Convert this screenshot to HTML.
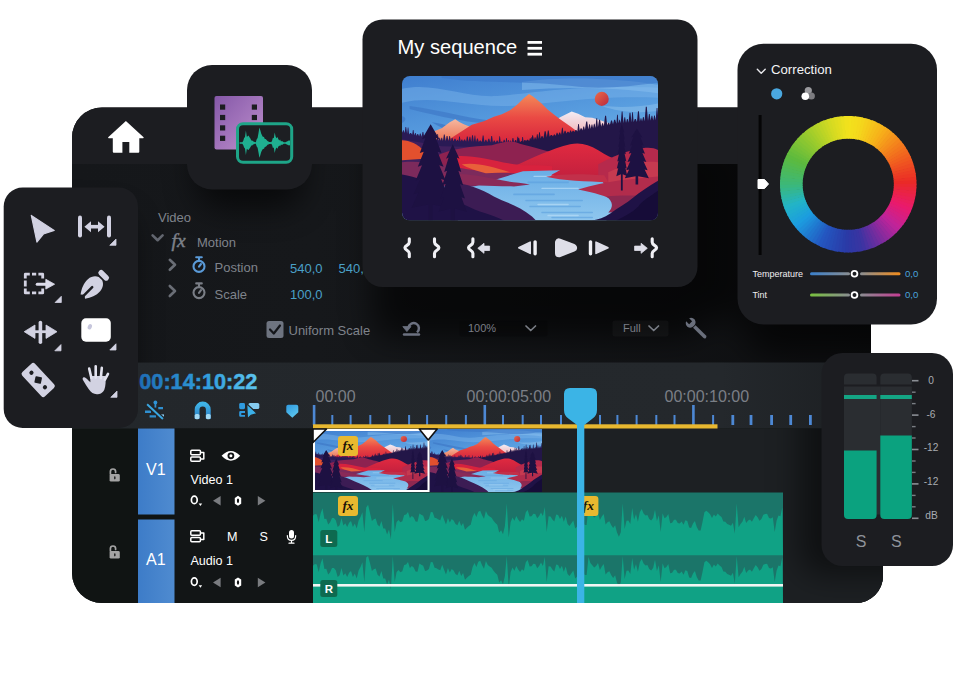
<!DOCTYPE html>
<html lang="en"><head><meta charset="utf-8"><title>Video editor</title>
<style>
html,body{margin:0;padding:0;background:#fff;}
body{width:960px;height:696px;overflow:hidden;font-family:"Liberation Sans",Arial,sans-serif;}
svg{display:block}
text{font-family:"Liberation Sans",Arial,sans-serif;}
</style></head><body>
<svg width="960" height="696" viewBox="0 0 960 696">

<defs>
<filter id="blur" x="-30%" y="-30%" width="160%" height="160%"><feGaussianBlur stdDeviation="16"/></filter>
<clipPath id="mainclip"><path d="M102 107.5 H871 V353 H883 V576 A27 27 0 0 1 856 603 H102 A30 30 0 0 1 72 573 V137.5 A30 30 0 0 1 102 107.5Z"/></clipPath>
<linearGradient id="fxbg" x1="0" y1="0" x2="1" y2="0"><stop offset="0" stop-color="#15171a"/><stop offset="0.3" stop-color="#16181b"/><stop offset="1" stop-color="#0e0f11"/></linearGradient>
<linearGradient id="tlh" x1="0" y1="0" x2="1" y2="0"><stop offset="0" stop-color="#23272b"/><stop offset="0.8" stop-color="#24282c"/><stop offset="1" stop-color="#1b1e21"/></linearGradient>
<linearGradient id="tcode" x1="0" y1="0" x2="1" y2="0"><stop offset="0" stop-color="#1e6db4"/><stop offset="0.55" stop-color="#2f9cdc"/><stop offset="1" stop-color="#5cc4ee"/></linearGradient>
<linearGradient id="bluelbl" x1="0" y1="0" x2="1" y2="0"><stop offset="0" stop-color="#3d7cc8"/><stop offset="1" stop-color="#4f8bd0"/></linearGradient>
<linearGradient id="film" x1="0" y1="0" x2="1" y2="1"><stop offset="0" stop-color="#8558a8"/><stop offset="0.5" stop-color="#a274bb"/><stop offset="1" stop-color="#bf93cd"/></linearGradient>
<linearGradient id="tempL" x1="0" y1="0" x2="1" y2="0"><stop offset="0" stop-color="#3a80cc"/><stop offset="1" stop-color="#8a8e92"/></linearGradient>
<linearGradient id="tempR" x1="0" y1="0" x2="1" y2="0"><stop offset="0" stop-color="#8a8e92"/><stop offset="1" stop-color="#f28c1c"/></linearGradient>
<linearGradient id="tintL" x1="0" y1="0" x2="1" y2="0"><stop offset="0" stop-color="#78c03e"/><stop offset="1" stop-color="#8a8e92"/></linearGradient>
<linearGradient id="tintR" x1="0" y1="0" x2="1" y2="0"><stop offset="0" stop-color="#8a8e92"/><stop offset="1" stop-color="#c43c92"/></linearGradient>
<linearGradient id="iconblue" x1="0" y1="0" x2="0" y2="1"><stop offset="0" stop-color="#3fb4e8"/><stop offset="1" stop-color="#2a7cc4"/></linearGradient>
<linearGradient id="markgrad" x1="0" y1="0" x2="0.6" y2="1"><stop offset="0" stop-color="#2f9ae0"/><stop offset="1" stop-color="#5cc6ee"/></linearGradient>
<linearGradient id="rfade" x1="0" y1="0" x2="1" y2="0"><stop offset="0" stop-color="#000" stop-opacity="0"/><stop offset="1" stop-color="#000" stop-opacity="0.32"/></linearGradient>
<clipPath id="trkclip"><rect x="542" y="428.5" width="342" height="176"/></clipPath>
<clipPath id="fxclip"><rect x="72" y="164" width="812" height="198.5"/></clipPath>
<clipPath id="clipSeq"><rect x="402" y="76" width="256" height="144.5" rx="8"/></clipPath>
<clipPath id="clipC1"><rect x="313" y="429" width="116.5" height="63"/></clipPath>
<clipPath id="clipC2"><rect x="429.5" y="429" width="112.5" height="63"/></clipPath>
</defs>
<symbol id="land" viewBox="0 0 256 144" preserveAspectRatio="xMidYMid slice">
<defs><linearGradient id="sky" x1="0" y1="0" x2="0.3" y2="1"><stop offset="0" stop-color="#3f7ecf"/><stop offset="0.45" stop-color="#5a9fe0"/><stop offset="1" stop-color="#8cc4ee"/></linearGradient><linearGradient id="mtn" x1="0" y1="0" x2="0" y2="1"><stop offset="0" stop-color="#f38a58"/><stop offset="0.45" stop-color="#ea4a44"/><stop offset="1" stop-color="#d4203c"/></linearGradient><linearGradient id="mtnL" x1="0" y1="0" x2="0" y2="1"><stop offset="0" stop-color="#f6b8a0"/><stop offset="1" stop-color="#ea6a4a"/></linearGradient><linearGradient id="mtnR" x1="0" y1="0" x2="0" y2="1"><stop offset="0" stop-color="#f2ecf4"/><stop offset="1" stop-color="#f2a0a0"/></linearGradient><linearGradient id="sun" x1="0" y1="0" x2="1" y2="1"><stop offset="0" stop-color="#ec6a48"/><stop offset="1" stop-color="#b8283e"/></linearGradient><linearGradient id="lake" x1="0" y1="0" x2="0" y2="1"><stop offset="0" stop-color="#6aaee6"/><stop offset="1" stop-color="#8fc6ee"/></linearGradient><linearGradient id="hillR" x1="0" y1="0" x2="0" y2="1"><stop offset="0" stop-color="#e02a40"/><stop offset="1" stop-color="#c4203e"/></linearGradient></defs>
<rect width="256" height="144" fill="url(#sky)"/>
<path d="M-5 14 C30 4 60 22 95 20 C130 18 170 8 262 12 L262 22 C190 18 140 30 100 30 C60 30 30 18 -5 28Z" fill="#7db6ea" opacity="0.45"/>
<path d="M120 6 C160 0 220 2 262 10 L262 18 C220 12 170 10 120 14Z" fill="#8fc4f0" opacity="0.45"/>
<path d="M8 30 C40 34 70 44 104 46 L104 49 C70 48 36 40 8 33Z" fill="#3f79c8" opacity="0.7"/>
<path d="M30 46 C44 48 56 52 66 55 L52 56 C44 53 36 50 30 46Z" fill="#3f79c8" opacity="0.8"/>
<path d="M0 40 C4 40 6 44 0 47Z" fill="#3f79c8" opacity="0.7"/>
<path d="M200 30 C225 32 245 30 262 26 L262 34 C240 38 215 36 200 30Z" fill="#9ccaf0" opacity="0.4"/>
<path d="M40 2 C80 8 120 4 170 10 C200 14 230 10 262 6 L262 0 L40 0Z" fill="#3a74c6" opacity="0.55"/>
<circle cx="199.5" cy="22.8" r="7" fill="url(#sun)"/>
<path d="M150 46 L158 41 L169.5 35.5 L176 37.5 L183 41 L190 41.5 L198 44 L210 48 L214 66 L150 66Z" fill="url(#mtnR)"/>
<path d="M17 62 L30 56 L40 52 L48 46 L53.5 43 L58 46 L62 48 L72 52 L80 68 L10 68Z" fill="url(#mtnL)"/>
<path d="M40 70 L46 64 L60 55 L70 48.5 L82 45 L92 40.5 L100 38 L108.5 34 L116 28 L122 22 L127 18 L131 20.5 L139 27 L145 33 L151.5 38 L158 43 L168 50 L176 56 L184 70 L40 70Z" fill="url(#mtn)"/>
<path d="M-2.0 82.0 L-2.0 56.1 L-1.1 53.6 L-0.3 53.6 L0.6 56.1 L0.6 56.6 L1.5 54.1 L2.2 54.1 L3.0 56.6 L3.0 57.2 L3.9 50.7 L4.6 50.7 L5.5 57.2 L5.5 57.7 L6.2 51.2 L6.8 51.2 L7.5 57.7 L7.5 58.2 L8.5 56.7 L9.4 56.7 L10.5 58.2 L10.5 58.8 L11.3 53.8 L11.9 53.8 L12.7 58.8 L12.7 59.3 L13.5 56.8 L14.1 56.8 L14.9 59.3 L14.9 59.8 L15.7 57.8 L16.5 57.8 L17.4 59.8 L17.4 60.4 L18.3 57.4 L19.0 57.4 L19.9 60.4 L19.9 60.9 L20.9 55.9 L21.7 55.9 L22.6 60.9 L22.6 61.5 L23.4 59.0 L24.1 59.0 L24.8 61.5 L24.8 62.0 L25.9 59.5 L26.7 59.5 L27.8 62.0 L27.8 62.7 L28.6 56.2 L29.3 56.2 L30.2 62.7 L30.2 63.2 L31.1 61.7 L31.9 61.7 L32.9 63.2 L32.9 63.8 L33.6 62.3 L34.3 62.3 L35.0 63.8 L35.0 64.3 L35.7 57.8 L36.3 57.8 L37.0 64.3 L37.0 64.5 L37.7 61.5 L38.3 61.5 L38.9 64.5 L38.9 64.6 L39.7 61.6 L40.4 61.6 L41.2 64.6 L41.2 64.7 L42.2 58.2 L43.0 58.2 L44.0 64.7 L44.0 64.8 L44.9 59.8 L45.8 59.8 L46.7 64.8 L46.7 64.9 L47.6 59.9 L48.3 59.9 L49.1 64.9 L49.1 64.9 L50.0 61.9 L50.8 61.9 L51.7 64.9 L51.7 65.0 L52.8 62.5 L53.7 62.5 L54.7 65.0 L54.7 65.1 L55.4 63.6 L56.0 63.6 L56.7 65.1 L56.7 65.2 L57.4 60.2 L58.1 60.2 L58.9 65.2 L58.9 65.2 L59.7 63.2 L60.5 63.2 L61.3 65.2 L61.3 65.3 L62.3 63.3 L63.2 63.3 L64.3 65.3 L64.3 65.4 L65.1 60.4 L65.9 60.4 L66.8 65.4 L66.8 65.5 L67.7 60.5 L68.5 60.5 L69.4 65.5 L69.4 65.6 L70.3 59.1 L71.1 59.1 L72.0 65.6 L72.0 65.7 L72.8 59.2 L73.4 59.2 L74.2 65.7 L74.2 65.7 L75.2 62.2 L76.0 62.2 L77.0 65.7 L77.0 65.8 L78.0 64.3 L78.9 64.3 L79.9 65.8 L79.9 65.9 L80.9 59.4 L81.7 59.4 L82.6 65.9 L82.6 66.0 L83.6 63.5 L84.4 63.5 L85.4 66.0 L85.4 66.1 L86.5 62.6 L87.4 62.6 L88.5 66.1 L88.5 66.2 L89.4 59.7 L90.2 59.7 L91.1 66.2 L91.1 66.3 L92.0 64.3 L92.8 64.3 L93.8 66.3 L93.8 66.4 L94.8 64.4 L95.7 64.4 L96.7 66.4 L96.7 66.5 L97.5 60.0 L98.1 60.0 L98.9 66.5 L98.9 66.6 L99.6 65.1 L100.2 65.1 L100.9 66.6 L100.9 66.6 L101.9 63.6 L102.7 63.6 L103.6 66.6 L103.6 66.7 L104.3 61.7 L104.9 61.7 L105.6 66.7 L105.6 66.8 L106.3 63.8 L106.9 63.8 L107.6 66.8 L107.6 66.8 L108.3 64.3 L108.9 64.3 L109.6 66.8 L109.6 66.9 L110.6 61.9 L111.4 61.9 L112.4 66.9 L112.4 67.0 L113.1 64.0 L113.8 64.0 L114.5 67.0 L114.5 67.1 L115.4 60.6 L116.2 60.6 L117.1 67.1 L117.1 67.1 L118.0 65.6 L118.7 65.6 L119.5 67.1 L119.5 67.2 L120.3 60.7 L121.0 60.7 L121.8 67.2 L121.8 67.3 L122.7 63.8 L123.5 63.8 L124.4 67.3 L124.4 67.4 L125.2 65.9 L125.9 65.9 L126.7 67.4 L126.7 67.5 L127.4 66.0 L128.0 66.0 L128.7 67.5 L128.7 67.5 L129.4 61.0 L130.0 61.0 L130.7 67.5 L130.0 82.0 Z" fill="#2a1a55"/>
<path d="M112.0 90.0 L112.0 67.5 L113.2 64.0 L114.2 64.0 L115.3 67.5 L115.3 66.8 L116.3 61.8 L117.2 61.8 L118.2 66.8 L118.2 66.3 L119.3 64.8 L120.3 64.8 L121.4 66.3 L121.4 65.6 L122.3 64.1 L123.0 64.1 L123.9 65.6 L123.9 65.1 L125.1 63.6 L126.1 63.6 L127.2 65.1 L127.2 64.5 L127.9 62.0 L128.6 62.0 L129.3 64.5 L129.3 64.0 L130.3 59.0 L131.0 59.0 L132.0 64.0 L132.0 63.5 L132.7 61.0 L133.4 61.0 L134.2 63.5 L134.2 63.1 L134.9 58.1 L135.6 58.1 L136.3 63.1 L136.3 62.6 L137.1 56.1 L137.8 56.1 L138.6 62.6 L138.6 62.2 L139.6 59.7 L140.4 59.7 L141.5 62.2 L141.5 61.6 L142.6 55.1 L143.6 55.1 L144.8 61.6 L144.8 60.9 L145.8 54.4 L146.6 54.4 L147.6 60.9 L147.6 60.4 L148.8 58.9 L149.8 58.9 L151.0 60.4 L151.0 59.7 L151.9 58.2 L152.8 58.2 L153.8 59.7 L153.8 59.1 L154.6 56.6 L155.4 56.6 L156.2 59.1 L156.2 58.7 L157.2 56.2 L158.0 56.2 L159.0 58.7 L159.0 58.1 L159.9 51.6 L160.6 51.6 L161.5 58.1 L161.5 57.6 L162.5 54.6 L163.4 54.6 L164.4 57.6 L164.4 57.0 L165.4 55.5 L166.3 55.5 L167.3 57.0 L167.3 56.4 L168.1 54.4 L168.8 54.4 L169.6 56.4 L169.6 56.0 L170.6 54.5 L171.4 54.5 L172.4 56.0 L172.4 55.4 L173.4 53.9 L174.2 53.9 L175.2 55.4 L175.2 54.9 L176.0 47.8 L176.7 47.8 L177.6 54.9 L177.6 54.4 L178.5 52.1 L179.4 52.1 L180.3 54.4 L180.3 53.8 L181.2 50.3 L181.9 50.3 L182.8 53.8 L182.8 53.3 L184.0 45.4 L185.0 45.4 L186.1 53.3 L186.1 52.7 L187.0 48.2 L187.7 48.2 L188.6 52.7 L188.6 52.2 L189.4 48.3 L190.1 48.3 L190.9 52.2 L190.9 51.7 L191.7 47.7 L192.4 47.7 L193.3 51.7 L193.3 51.2 L194.1 42.2 L194.9 42.2 L195.7 51.2 L195.7 50.8 L196.9 43.6 L197.8 43.6 L199.0 50.8 L199.0 50.1 L199.9 47.1 L200.7 47.1 L201.6 50.1 L201.6 49.6 L202.8 39.6 L203.8 39.6 L205.0 49.6 L205.0 48.9 L205.9 46.5 L206.8 46.5 L207.7 48.9 L207.7 48.4 L208.8 44.3 L209.7 44.3 L210.8 48.4 L210.8 47.7 L211.9 43.5 L212.9 43.5 L214.1 47.7 L214.1 47.4 L214.8 38.7 L215.5 38.7 L216.2 47.4 L216.2 47.2 L217.0 43.7 L217.6 43.7 L218.4 47.2 L218.4 47.0 L219.4 35.3 L220.2 35.3 L221.2 47.0 L221.2 46.8 L222.1 41.2 L222.8 41.2 L223.7 46.8 L223.7 46.6 L224.6 42.8 L225.4 42.8 L226.2 46.6 L226.2 46.3 L227.2 36.6 L228.1 36.6 L229.1 46.3 L229.1 46.1 L229.8 36.1 L230.5 36.1 L231.3 46.1 L231.3 45.9 L232.4 42.8 L233.4 42.8 L234.6 45.9 L234.6 45.6 L235.6 35.2 L236.5 35.2 L237.5 45.6 L237.5 45.3 L238.3 42.1 L238.9 42.1 L239.7 45.3 L239.7 45.1 L240.6 40.8 L241.3 40.8 L242.2 45.1 L242.2 44.9 L243.4 30.6 L244.4 30.6 L245.6 44.9 L245.6 44.6 L246.5 37.8 L247.3 37.8 L248.2 44.6 L248.2 44.4 L249.1 39.7 L249.9 39.7 L250.8 44.4 L250.8 44.1 L251.7 39.4 L252.4 39.4 L253.3 44.1 L253.3 43.9 L254.2 31.9 L255.0 31.9 L255.9 43.9 L255.9 43.7 L256.7 27.9 L257.3 27.9 L258.1 43.7 L258.1 43.5 L258.9 39.8 L259.6 39.8 L260.5 43.5 L260.0 90.0 Z" fill="#231648"/>
<path d="M0 63 L40 70 L128 72 L128 90 L0 90Z" fill="#40205e"/>
<path d="M0 64 C8 64 16 68 22 74 L30 82 L0 84Z" fill="#e2502e"/>
<path d="M34 80 C50 72 70 70 90 69 C100 66 108 64 114 66 C124 70 140 72 160 80 L160 92 L34 92Z" fill="#8e2250"/>
<path d="M112 90 C130 82 150 72 168 68 C178 66 186 68 196 74 C204 79 210 82 216 84 L216 100 L112 100Z" fill="url(#hillR)"/>
<path d="M52 80 C70 78 90 84 112 88 C125 90 135 88 150 90 L150 100 L52 98Z" fill="#d8223e"/>
<path d="M196 88 C210 80 226 74 240 72 C248 71 252 72 256 74 L256 130 L196 120Z" fill="#b62a4c"/>
<path d="M206 96 C222 88 240 84 256 86 L256 120 L206 118Z" fill="#c63a50"/>
<path d="M0 86 C20 84 40 88 60 92 C80 96 100 96 128 98 L128 110 L0 110Z" fill="#7c2a5c"/>
<path d="M60 88 C75 86 90 90 108 96 L84 97 C74 94 66 92 60 88Z" fill="#e8603a"/>
<path d="M66 112 C82 107 100 101 121 95 L158 94 C152 97 147 99 150 101 C165 103 185 103 200 105 L206 114 C213 122 216 130 204 144 L56 144Z" fill="url(#lake)"/>
<path d="M112 118 h40 M124 124 h56 M128 130 h50 M140 136 h50 M126 106 h40 M150 141 h40" stroke="#5a9ede" stroke-width="1.6" opacity="0.6" fill="none" stroke-linecap="round"/>
<path d="M136 128 h30 M140 112 h36 M146 139 h30 M132 100 h20" stroke="#b6dcf6" stroke-width="1.4" opacity="0.7" fill="none" stroke-linecap="round"/>
<path d="M40 98 C60 96 80 100 100 104 C110 106 118 106 128 108 L112 110 C90 110 70 108 40 108Z" fill="#8a2a58"/>
<path d="M144 100.5 C160 97 180 97.5 202 99 L206 106 C185 105 160 104.5 144 100.5Z" fill="#c2304a"/>
<path d="M176 113 C190 109 204 106 218 104 L256 100 L256 128 C236 126 214 126 210 124 C206 120 192 116 176 113Z" fill="#b22c4c"/>
<path d="M204 120 C216 118 236 120 256 118 L256 136 L206 136 C212 130 210 124 204 120Z" fill="#8e2850"/>
<path d="M50 106 C64 107 80 113 92 120 C104 126 118 130 130 140 L134 144 L50 144Z" fill="#3c1c54"/>
<path d="M0 98 C14 100 28 106 40 114 C52 122 62 129 78 135 C88 138 96 141 102 144 L0 144Z" fill="#1f1246"/>
<path d="M256 104 C246 110 238 115 231 121 C224 127 216 131 208 137 C202 141 196 143 190 144 L256 144Z" fill="#1f1246"/>
<path d="M256 114 C248 120 240 124 236 130 C230 136 222 140 214 144 L256 144Z" fill="#160c38"/>
<path d="M29.0 46.0 L29.0 48.0 L20.3 63.1 L23.8 61.7 L18.2 76.8 L22.1 75.4 L16.2 90.4 L20.4 89.0 L14.1 104.1 L18.6 102.7 L12.1 117.8 L16.9 116.4 L10.0 131.4 L27.0 128.0 L27.0 144.0 L31.0 144.0 L31.0 128.0 L48.0 131.4 L41.1 116.4 L45.9 117.8 L39.4 102.7 L43.9 104.1 L37.6 89.0 L41.8 90.4 L35.9 75.4 L39.8 76.8 L34.2 61.7 L37.7 63.1 L29.0 48.0 Z" fill="#1d1142"/>
<path d="M51.0 66.0 L51.0 68.0 L44.3 82.5 L46.9 81.2 L42.5 95.7 L45.4 94.4 L40.6 108.9 L43.9 107.6 L38.8 122.1 L42.3 120.8 L37.0 135.3 L49.0 132.0 L49.0 144.0 L53.0 144.0 L53.0 132.0 L65.0 135.3 L59.7 120.8 L63.2 122.1 L58.1 107.6 L61.4 108.9 L56.6 94.4 L59.5 95.7 L55.1 81.2 L57.7 82.5 L51.0 68.0 Z" fill="#1d1142"/>
<path d="M219.5 47.0 L219.5 48.1 L217.1 56.1 L218.1 55.4 L216.6 63.4 L217.6 62.7 L216.0 70.7 L217.2 70.0 L215.5 78.0 L216.8 77.2 L215.0 85.2 L216.3 84.5 L214.5 92.5 L215.9 91.8 L214.0 99.8 L218.6 98.0 L218.6 114.0 L220.4 114.0 L220.4 98.0 L225.0 99.8 L223.1 91.8 L224.5 92.5 L222.7 84.5 L224.0 85.2 L222.2 77.2 L223.5 78.0 L221.8 70.0 L223.0 70.7 L221.4 62.7 L222.4 63.4 L220.9 55.4 L221.9 56.1 L219.5 48.1 Z" fill="#1d1142"/>
<path d="M234.5 51.0 L234.5 52.2 L229.0 61.2 L231.2 60.4 L227.7 69.4 L230.1 68.6 L226.4 77.5 L229.0 76.7 L225.1 85.7 L227.9 84.9 L223.8 93.9 L226.8 93.1 L222.5 102.0 L233.2 100.0 L233.2 108.0 L235.8 108.0 L235.8 100.0 L246.5 102.0 L242.2 93.1 L245.2 93.9 L241.1 84.9 L243.9 85.7 L240.0 76.7 L242.6 77.5 L238.9 68.6 L241.3 69.4 L237.8 60.4 L240.0 61.2 L234.5 52.2 Z" fill="#1d1142"/>
</symbol>
<g clip-path="url(#mainclip)">
<rect x="72" y="107" width="812" height="497" fill="#131417"/>
<rect x="72" y="107" width="812" height="57" fill="#1c1d21"/>
<rect x="72" y="164" width="812" height="198.5" fill="url(#fxbg)"/>
<rect x="72" y="362.5" width="812" height="66.5" fill="url(#tlh)"/>
<rect x="72" y="428.5" width="812" height="176" fill="#101413"/>
<rect x="174.5" y="428.5" width="138.5" height="176" fill="#121516"/>
<rect x="313" y="428.5" width="571" height="176" fill="#1d2023"/>
<g clip-path="url(#trkclip)"><rect x="800" y="370" width="120" height="205" rx="20" fill="#000" opacity="0.5" filter="url(#blur)"/></g>
<g clip-path="url(#fxclip)"><g filter="url(#blur)" fill="#000" opacity="0.62">
<rect x="372" y="70" width="330" height="268" rx="20"/>
<rect x="745" y="80" width="185" height="275" rx="26"/>
<rect x="700" y="140" width="40" height="180" rx="10"/>
<rect x="196" y="90" width="107" height="118" rx="25"/>
<rect x="10" y="215" width="120" height="238" rx="19"/>
</g></g>
</g>
<path d="M125.9 121 L143.6 137.2 Q144 138.2 143 138.2 H139.3 V151.8 Q139.3 152.8 138.3 152.8 H129.3 V142 H122.4 V152.8 H113.8 Q112.8 152.8 112.8 151.8 V138.2 H108.8 Q107.8 138.2 108.2 137.2Z" fill="#fff"/>
<g font-size="13" fill="#7f838b">
<text x="158" y="222">Video</text>
<text x="197" y="246.7">Motion</text>
<text x="214.5" y="272.3">Postion</text>
<text x="214.5" y="298.8">Scale</text>
<text x="288.5" y="335">Uniform Scale</text>
</g>
<g font-size="13" fill="#4aa0c8">
<text x="290" y="272.5">540,0</text>
<text x="338.5" y="272.5">540,0</text>
<text x="290" y="298.8">100,0</text>
</g>
<text x="171.5" y="247" style="font:italic 19.5px 'Liberation Serif',serif" fill="#7d818a" stroke="#7d818a" stroke-width="0.45">fx</text>
<path d="M152.6 235.4 L157.6 240.2 L162.6 235.4" fill="none" stroke="#62666f" stroke-width="2.6" stroke-linecap="round" stroke-linejoin="round"/>
<path d="M169.8 259.8 L175 264.8 L169.8 269.8" fill="none" stroke="#6a6e76" stroke-width="2.6" stroke-linecap="round" stroke-linejoin="round"/>
<path d="M169.8 286 L175 291 L169.8 296" fill="none" stroke="#6a6e76" stroke-width="2.6" stroke-linecap="round" stroke-linejoin="round"/>
<g fill="none" stroke="#5a9ad8" stroke-width="2.1" stroke-linecap="round"><circle cx="199.0" cy="266.4" r="5.5"/><path d="M199.0 260.4 V257.8 M196.2 257.2 H201.8 M199.0 266.6 L201.0 264.0"/></g>
<g fill="none" stroke="#7a7e86" stroke-width="2.1" stroke-linecap="round"><circle cx="199.0" cy="292.6" r="5.5"/><path d="M199.0 286.6 V284.0 M196.2 283.4 H201.8 M199.0 292.8 L201.0 290.2"/></g>
<rect x="266.5" y="321" width="17" height="17" rx="2.5" fill="#6e7480"/>
<path d="M270 329.5 L273.8 333.5 L280 325.5" fill="none" stroke="#14161a" stroke-width="2.2" stroke-linecap="round" stroke-linejoin="round"/>
<g><path d="M417 332.4 A5.3 5.3 0 1 0 408.4 327.4" fill="none" stroke="#6c7180" stroke-width="2.5"/><path d="M402.8 326.6 H411 L406.9 331.6Z" fill="#6c7180" stroke="#6c7180" stroke-width="0.8" stroke-linejoin="round"/><rect x="402.8" y="333.2" width="17.4" height="2.6" rx="1.2" fill="#6c7180"/></g>
<rect x="459.5" y="320.5" width="88" height="16" rx="2" fill="#000" opacity="0.18"/>
<text x="468" y="332.2" font-size="11" fill="#7a7e86">100%</text>
<path d="M526 326 L530.7 330.5 L535.5 326" fill="none" stroke="#7a7e86" stroke-width="1.7" stroke-linecap="round" stroke-linejoin="round"/>
<rect x="612.5" y="320.5" width="56" height="16" rx="2" fill="#fff" opacity="0.03"/>
<text x="623" y="332.2" font-size="11" fill="#7a7e86">Full</text>
<path d="M649 326 L653.7 330.5 L658.5 326" fill="none" stroke="#7a7e86" stroke-width="1.7" stroke-linecap="round" stroke-linejoin="round"/>
<g transform="translate(696.3 328.4) rotate(-45) scale(0.93)"><path d="M-1.9 -3 V12.5 Q-1.9 14.6 0 14.6 Q1.9 14.6 1.9 12.5 V-3 Z" fill="#6a6f7c"/><path d="M-5.6 -8 A5.8 5.8 0 0 0 5.6 -8 A5.8 5.8 0 0 0 2.3 -13.2 V-8.6 H-2.3 V-13.2 A5.8 5.8 0 0 0 -5.6 -8Z" fill="#6a6f7c"/></g>
<g clip-path="url(#mainclip)">
<text x="139.3" y="389.2" font-size="22" font-weight="bold" stroke="url(#tcode)" stroke-width="0.5" fill="url(#tcode)" textLength="118" lengthAdjust="spacingAndGlyphs">00:14:10:22</text>
<g stroke="#2f8fd0" stroke-width="2.4" fill="none"><path d="M158.3 408.1 H163 M145 411.8 H151 M149.6 416.4 H156"/><path d="M160 415.6 H164" stroke="#8ccaf0"/><path d="M155.4 402.5 V407.6" stroke="#2f93d6" stroke-width="1.8"/><path d="M147.1 404.3 L162.9 418.9" stroke="#22262a" stroke-width="4.4"/><path d="M147.1 404.3 L162.9 418.9" stroke="#3aa6e0" stroke-width="2"/></g>
<circle cx="155.4" cy="402.4" r="1.9" fill="#2f93d6"/>
<path d="M197.1 419 V409.6 A5.6 5.6 0 0 1 208.3 409.6 V419" fill="none" stroke="url(#iconblue)" stroke-width="4.8"/>
<rect x="194.7" y="414" width="4.8" height="5.2" rx="1.6" fill="#a4daf4"/><rect x="205.9" y="414" width="4.8" height="5.2" rx="1.6" fill="#a4daf4"/>
<g><rect x="239.2" y="403.1" width="5.8" height="6.1" rx="1.4" fill="#2f9be0"/><path d="M245 411 H240.4 Q239.2 411 239.2 412.2 V415.6 Q239.2 416.8 240.4 416.8 H245 V414.9 H241.3 V412.9 H245Z" fill="#2f9be0"/><rect x="248.4" y="403" width="10.9" height="6" rx="1.6" fill="#86ccf0"/><path d="M246.6 403.6 L257.2 413.6 L251 415.4 L247.4 419Z" fill="#3cb0e8" stroke="#22262a" stroke-width="1.3" stroke-linejoin="round"/></g>
<path d="M288.2 404.8 H296.4 Q298.3 404.8 298.3 406.7 V412.2 L292.3 417.7 L286.3 412.2 V406.7 Q286.3 404.8 288.2 404.8Z" fill="url(#markgrad)"/>
<g font-size="16" fill="#7b7f86">
<text x="315.5" y="402.3">00:00</text>
<text x="466.5" y="402.3">00:00:05:00</text>
<text x="664.5" y="402.3">00:00:10:00</text>
</g>
<rect x="312.8" y="405" width="2.6" height="20" fill="#4d88d4"/>
<rect x="331.3" y="415" width="2.0" height="10" fill="#4d88d4"/>
<rect x="349.6" y="415" width="2.0" height="10" fill="#4d88d4"/>
<rect x="369.3" y="415" width="2.0" height="10" fill="#4d88d4"/>
<rect x="388.4" y="415" width="2.0" height="10" fill="#4d88d4"/>
<rect x="408.1" y="415" width="2.0" height="10" fill="#4d88d4"/>
<rect x="426.1" y="415" width="2.0" height="10" fill="#4d88d4"/>
<rect x="445.2" y="415" width="2.0" height="10" fill="#4d88d4"/>
<rect x="464.9" y="415" width="2.0" height="10" fill="#4d88d4"/>
<rect x="483.5" y="405" width="2.6" height="20" fill="#4d88d4"/>
<rect x="502.0" y="415" width="2.0" height="10" fill="#4d88d4"/>
<rect x="521.7" y="415" width="2.0" height="10" fill="#4d88d4"/>
<rect x="540.0" y="415" width="2.0" height="10" fill="#4d88d4"/>
<rect x="560.0" y="415" width="2.0" height="10" fill="#4d88d4"/>
<rect x="579.0" y="415" width="2.0" height="10" fill="#4d88d4"/>
<rect x="599.0" y="415" width="2.0" height="10" fill="#4d88d4"/>
<rect x="616.4" y="415" width="2.0" height="10" fill="#4d88d4"/>
<rect x="635.6" y="415" width="2.0" height="10" fill="#4d88d4"/>
<rect x="655.3" y="415" width="2.0" height="10" fill="#4d88d4"/>
<rect x="673.5" y="415" width="2.0" height="10" fill="#4d88d4"/>
<rect x="692.1" y="405" width="2.6" height="20" fill="#4d88d4"/>
<rect x="712.1" y="415" width="2.0" height="10" fill="#4d88d4"/>
<rect x="731.4" y="415" width="2.8" height="10" fill="#4d88d4"/>
<rect x="749.6" y="415" width="2.8" height="10" fill="#4d88d4"/>
<rect x="770.2" y="415" width="2.8" height="10" fill="#4d88d4"/>
<rect x="789.3" y="415" width="2.8" height="10" fill="#4d88d4"/>
<rect x="809.0" y="415" width="2.8" height="10" fill="#4d88d4"/>
<rect x="313" y="424.3" width="404.5" height="4.2" fill="#e8b830"/>
<rect x="138" y="428.5" width="36.5" height="86" fill="url(#bluelbl)"/>
<rect x="138" y="519.5" width="36.5" height="90" fill="url(#bluelbl)"/>
<text x="155.8" y="475" font-size="16" fill="#fff" text-anchor="middle">V1</text>
<text x="155.8" y="565" font-size="16" fill="#fff" text-anchor="middle">A1</text>
<g transform="translate(108.0 468.0)"><path d="M2.4 6 V3.6 A2.6 2.6 0 0 1 7.6 3.6 V4.4" fill="none" stroke="#a4a4a4" stroke-width="1.7" stroke-linecap="round"/><rect x="1.6" y="6" width="10.2" height="7.6" rx="1.4" fill="#a4a4a4"/><rect x="6" y="8.2" width="1.6" height="3.2" rx="0.8" fill="#2a2a2a"/></g>
<g transform="translate(108.0 545.0)"><path d="M2.4 6 V3.6 A2.6 2.6 0 0 1 7.6 3.6 V4.4" fill="none" stroke="#a4a4a4" stroke-width="1.7" stroke-linecap="round"/><rect x="1.6" y="6" width="10.2" height="7.6" rx="1.4" fill="#a4a4a4"/><rect x="6" y="8.2" width="1.6" height="3.2" rx="0.8" fill="#2a2a2a"/></g>
<g transform="translate(190.0 449.5)" fill="none" stroke="#fff" stroke-width="1.5" stroke-linejoin="round"><rect x="0.8" y="0.8" width="9.6" height="4.4" rx="1"/><rect x="0.8" y="7.4" width="9.6" height="4.4" rx="1"/><path d="M10.4 3 H13.8 V9.6 H10.4"/></g>
<g transform="translate(190.0 530.0)" fill="none" stroke="#fff" stroke-width="1.5" stroke-linejoin="round"><rect x="0.8" y="0.8" width="9.6" height="4.4" rx="1"/><rect x="0.8" y="7.4" width="9.6" height="4.4" rx="1"/><path d="M10.4 3 H13.8 V9.6 H10.4"/></g>
<path d="M221.6 455.8 Q230.8 446 240.2 455.8 Q230.8 465.6 221.6 455.8Z" fill="#fff"/>
<circle cx="230.9" cy="455.8" r="3.4" fill="#111315"/><circle cx="230.9" cy="455.8" r="1.5" fill="#fff"/>
<g font-size="12.6" fill="#fff">
<text x="190.6" y="484.3">Video 1</text>
<text x="190.4" y="565">Audio 1</text>
<text x="227" y="541" font-size="12.6">M</text>
<text x="259.4" y="541" font-size="12.6">S</text>
</g>
<rect x="289" y="530" width="5" height="8.6" rx="2.5" fill="#fff"/>
<path d="M287.3 535.5 Q287.3 540.4 291.5 540.4 Q295.7 540.4 295.7 535.5 M291.5 540.4 V543 M289 543.2 H294" fill="none" stroke="#fff" stroke-width="1.2" stroke-linecap="round"/>
<ellipse cx="194.3" cy="499.9" rx="2.9" ry="3.8" fill="none" stroke="#fff" stroke-width="1.7"/>
<path d="M198.6 503.6 h3.6 l-1.8 2.4z" fill="#fff"/>
<path d="M220.6 496.0 V505.6 L213 500.8Z" fill="#7a7c80"/>
<path d="M238 495.8 L241.2 497.9 V503.7 L238 505.8 L234.8 503.7 V497.9Z" fill="#fff"/>
<ellipse cx="238" cy="500.8" rx="1.1" ry="2.2" fill="#111315"/>
<path d="M257.8 496.0 V505.6 L265.4 500.8Z" fill="#7a7c80"/>
<ellipse cx="194.3" cy="581.6" rx="2.9" ry="3.8" fill="none" stroke="#fff" stroke-width="1.7"/>
<path d="M198.6 585.3 h3.6 l-1.8 2.4z" fill="#fff"/>
<path d="M220.6 577.7 V587.3 L213 582.5Z" fill="#7a7c80"/>
<path d="M238 577.5 L241.2 579.6 V585.4 L238 587.5 L234.8 585.4 V579.6Z" fill="#fff"/>
<ellipse cx="238" cy="582.5" rx="1.1" ry="2.2" fill="#111315"/>
<path d="M257.8 577.7 V587.3 L265.4 582.5Z" fill="#7a7c80"/>
<g clip-path="url(#clipC1)"><g transform="translate(313 429) scale(0.4551 0.4375)"><use href="#land" width="256" height="144"/></g></g>
<g clip-path="url(#clipC2)"><g transform="translate(429.5 429) scale(0.4395 0.4375)"><use href="#land" width="256" height="144"/></g></g>
<rect x="314" y="430" width="114.5" height="61" fill="none" stroke="#fff" stroke-width="2"/>
<path d="M313 429 H326.5 L313 442.5Z" fill="#fff" stroke="#111" stroke-width="1.6" stroke-linejoin="round"/>
<path d="M419.3 429 H437.2 L428.2 440Z" fill="#fff" stroke="#111" stroke-width="1.6" stroke-linejoin="round"/>
<rect x="313" y="492.5" width="470" height="112" fill="#1b7569"/>
<path d="M313.0 555.3 L313.0 515.8 L314.9 514.0 L316.8 514.6 L318.7 522.1 L320.6 513.4 L322.5 508.2 L324.4 519.0 L326.3 518.7 L328.2 524.5 L330.1 522.3 L332.0 517.9 L333.9 518.0 L335.8 520.3 L337.7 526.9 L339.6 525.3 L341.5 518.0 L343.4 525.4 L345.3 523.3 L347.2 527.1 L349.1 522.7 L351.0 521.1 L352.9 526.9 L354.8 523.5 L356.7 528.4 L358.6 520.5 L360.5 517.1 L362.4 512.3 L364.3 532.0 L366.2 507.5 L368.1 504.7 L370.0 513.0 L371.9 520.9 L373.8 519.2 L375.7 518.6 L377.6 524.7 L379.5 526.4 L381.4 520.9 L383.3 528.5 L385.2 528.5 L387.1 534.5 L389.0 529.5 L390.9 538.9 L392.8 503.5 L394.7 531.9 L396.6 522.1 L398.5 520.0 L400.4 522.3 L402.3 521.2 L404.2 515.1 L406.1 514.4 L408.0 512.1 L409.9 517.9 L411.8 516.1 L413.7 517.4 L415.6 521.4 L417.5 521.7 L419.4 513.6 L421.3 514.7 L423.2 515.7 L425.1 520.9 L427.0 520.5 L428.9 519.1 L430.8 512.0 L432.7 512.3 L434.6 517.7 L436.5 518.2 L438.4 519.4 L440.3 520.2 L442.2 514.8 L444.1 519.8 L446.0 524.4 L447.9 517.9 L449.8 522.6 L451.7 518.9 L453.6 520.5 L455.5 523.9 L457.4 525.2 L459.3 520.8 L461.2 526.0 L463.1 522.9 L465.0 529.7 L466.9 527.8 L468.8 526.1 L470.7 524.7 L472.6 517.0 L474.5 513.1 L476.4 517.0 L478.3 511.8 L480.2 510.7 L482.1 515.3 L484.0 518.8 L485.9 511.1 L487.8 515.0 L489.7 516.4 L491.6 517.8 L493.5 520.7 L495.4 523.0 L497.3 524.7 L499.2 532.6 L501.1 530.2 L503.0 534.3 L504.9 526.0 L506.8 503.5 L508.7 537.5 L510.6 522.3 L512.5 517.6 L514.4 520.8 L516.3 515.9 L518.2 519.6 L520.1 522.0 L522.0 519.2 L523.9 520.8 L525.8 512.3 L527.7 509.9 L529.6 516.5 L531.5 516.2 L533.4 513.8 L535.3 513.9 L537.2 518.3 L539.1 516.0 L541.0 512.4 L542.9 515.9 L544.8 507.1 L546.7 532.0 L548.6 516.2 L550.5 516.5 L552.4 519.5 L554.3 521.4 L556.2 514.4 L558.1 515.0 L560.0 519.1 L561.9 515.7 L563.8 521.8 L565.7 516.6 L567.6 524.0 L569.5 526.1 L571.4 523.3 L573.3 520.4 L575.2 528.6 L577.1 526.4 L579.0 521.8 L580.9 527.4 L582.8 520.6 L584.7 524.9 L586.6 525.0 L588.5 507.1 L590.4 512.9 L592.3 515.2 L594.2 517.5 L596.1 515.9 L598.0 513.0 L599.9 520.1 L601.8 516.4 L603.7 513.9 L605.6 524.5 L607.5 522.2 L609.4 521.2 L611.3 525.2 L613.2 528.0 L615.1 525.2 L617.0 532.6 L618.9 536.7 L620.8 532.2 L622.7 503.5 L624.6 528.9 L626.5 520.7 L628.4 520.5 L630.3 524.0 L632.2 507.9 L634.1 519.7 L636.0 514.1 L637.9 521.7 L639.8 512.2 L641.7 509.0 L643.6 513.6 L645.5 515.5 L647.4 514.9 L649.3 519.1 L651.2 520.5 L653.1 517.9 L655.0 509.8 L656.9 520.9 L658.8 515.3 L660.7 532.0 L662.6 513.3 L664.5 518.2 L666.4 517.0 L668.3 514.1 L670.2 523.3 L672.1 522.8 L674.0 519.8 L675.9 519.7 L677.8 523.1 L679.7 523.6 L681.6 521.5 L683.5 524.7 L685.4 520.2 L687.3 520.9 L689.2 527.6 L691.1 528.0 L693.0 523.4 L694.9 521.0 L696.8 527.0 L698.7 530.4 L700.6 530.6 L702.5 522.1 L704.4 512.3 L706.3 510.8 L708.2 512.3 L710.1 514.3 L712.0 518.1 L713.9 514.4 L715.8 516.6 L717.7 513.5 L719.6 515.6 L721.5 517.0 L723.4 521.4 L725.3 521.7 L727.2 524.0 L729.1 524.7 L731.0 525.7 L732.9 522.8 L734.8 533.5 L736.7 503.5 L738.6 527.3 L740.5 524.0 L742.4 521.8 L744.3 516.7 L746.2 523.0 L748.1 520.4 L750.0 519.6 L751.9 521.7 L753.8 518.3 L755.7 515.1 L757.6 517.3 L759.5 520.8 L761.4 519.1 L763.3 514.7 L765.2 514.0 L767.1 513.7 L769.0 518.0 L770.9 518.4 L772.8 517.3 L774.7 532.0 L776.6 520.4 L778.5 515.6 L780.4 516.3 L782.3 507.5 L783.0 555.3 Z" fill="#10a285"/>
<path d="M313.0 604.0 L313.0 565.8 L314.9 564.0 L316.8 564.6 L318.7 572.1 L320.6 563.4 L322.5 558.2 L324.4 569.0 L326.3 568.7 L328.2 574.5 L330.1 572.3 L332.0 567.9 L333.9 568.0 L335.8 570.3 L337.7 576.9 L339.6 575.3 L341.5 568.0 L343.4 575.4 L345.3 573.3 L347.2 577.1 L349.1 572.7 L351.0 571.1 L352.9 576.9 L354.8 573.5 L356.7 578.4 L358.6 570.5 L360.5 567.1 L362.4 562.3 L364.3 582.0 L366.2 557.5 L368.1 556.0 L370.0 563.0 L371.9 570.9 L373.8 569.2 L375.7 568.6 L377.6 574.7 L379.5 576.4 L381.4 570.9 L383.3 578.5 L385.2 578.5 L387.1 584.5 L389.0 579.5 L390.9 588.9 L392.8 556.0 L394.7 581.9 L396.6 572.1 L398.5 570.0 L400.4 572.3 L402.3 571.2 L404.2 565.1 L406.1 564.4 L408.0 562.1 L409.9 567.9 L411.8 566.1 L413.7 567.4 L415.6 571.4 L417.5 571.7 L419.4 563.6 L421.3 564.7 L423.2 565.7 L425.1 570.9 L427.0 570.5 L428.9 569.1 L430.8 562.0 L432.7 562.3 L434.6 567.7 L436.5 568.2 L438.4 569.4 L440.3 570.2 L442.2 564.8 L444.1 569.8 L446.0 574.4 L447.9 567.9 L449.8 572.6 L451.7 568.9 L453.6 570.5 L455.5 573.9 L457.4 575.2 L459.3 570.8 L461.2 576.0 L463.1 572.9 L465.0 579.7 L466.9 577.8 L468.8 576.1 L470.7 574.7 L472.6 567.0 L474.5 563.1 L476.4 567.0 L478.3 561.8 L480.2 560.7 L482.1 565.3 L484.0 568.8 L485.9 561.1 L487.8 565.0 L489.7 566.4 L491.6 567.8 L493.5 570.7 L495.4 573.0 L497.3 574.7 L499.2 582.6 L501.1 580.2 L503.0 584.3 L504.9 576.0 L506.8 556.0 L508.7 587.5 L510.6 572.3 L512.5 567.6 L514.4 570.8 L516.3 565.9 L518.2 569.6 L520.1 572.0 L522.0 569.2 L523.9 570.8 L525.8 562.3 L527.7 559.9 L529.6 566.5 L531.5 566.2 L533.4 563.8 L535.3 563.9 L537.2 568.3 L539.1 566.0 L541.0 562.4 L542.9 565.9 L544.8 557.1 L546.7 582.0 L548.6 566.2 L550.5 566.5 L552.4 569.5 L554.3 571.4 L556.2 564.4 L558.1 565.0 L560.0 569.1 L561.9 565.7 L563.8 571.8 L565.7 566.6 L567.6 574.0 L569.5 576.1 L571.4 573.3 L573.3 570.4 L575.2 578.6 L577.1 576.4 L579.0 571.8 L580.9 577.4 L582.8 570.6 L584.7 574.9 L586.6 575.0 L588.5 557.1 L590.4 562.9 L592.3 565.2 L594.2 567.5 L596.1 565.9 L598.0 563.0 L599.9 570.1 L601.8 566.4 L603.7 563.9 L605.6 574.5 L607.5 572.2 L609.4 571.2 L611.3 575.2 L613.2 578.0 L615.1 575.2 L617.0 582.6 L618.9 586.7 L620.8 582.2 L622.7 556.0 L624.6 578.9 L626.5 570.7 L628.4 570.5 L630.3 574.0 L632.2 557.9 L634.1 569.7 L636.0 564.1 L637.9 571.7 L639.8 562.2 L641.7 559.0 L643.6 563.6 L645.5 565.5 L647.4 564.9 L649.3 569.1 L651.2 570.5 L653.1 567.9 L655.0 559.8 L656.9 570.9 L658.8 565.3 L660.7 582.0 L662.6 563.3 L664.5 568.2 L666.4 567.0 L668.3 564.1 L670.2 573.3 L672.1 572.8 L674.0 569.8 L675.9 569.7 L677.8 573.1 L679.7 573.6 L681.6 571.5 L683.5 574.7 L685.4 570.2 L687.3 570.9 L689.2 577.6 L691.1 578.0 L693.0 573.4 L694.9 571.0 L696.8 577.0 L698.7 580.4 L700.6 580.6 L702.5 572.1 L704.4 562.3 L706.3 560.8 L708.2 562.3 L710.1 564.3 L712.0 568.1 L713.9 564.4 L715.8 566.6 L717.7 563.5 L719.6 565.6 L721.5 567.0 L723.4 571.4 L725.3 571.7 L727.2 574.0 L729.1 574.7 L731.0 575.7 L732.9 572.8 L734.8 583.5 L736.7 556.0 L738.6 577.3 L740.5 574.0 L742.4 571.8 L744.3 566.7 L746.2 573.0 L748.1 570.4 L750.0 569.6 L751.9 571.7 L753.8 568.3 L755.7 565.1 L757.6 567.3 L759.5 570.8 L761.4 569.1 L763.3 564.7 L765.2 564.0 L767.1 563.7 L769.0 568.0 L770.9 568.4 L772.8 567.3 L774.7 582.0 L776.6 570.4 L778.5 565.6 L780.4 566.3 L782.3 557.5 L783.0 604.0 Z" fill="#10a285"/>
<rect x="313" y="584" width="470" height="2.6" fill="#f2f6f4"/>
<rect x="320.3" y="530" width="17" height="17" rx="2.5" fill="#0e6a50"/>
<rect x="320.3" y="580" width="17" height="17" rx="2.5" fill="#0e6a50"/>
<text x="328.8" y="542.8" font-size="11.5" font-weight="bold" fill="#fff" text-anchor="middle">L</text>
<text x="328.8" y="592.8" font-size="11.5" font-weight="bold" fill="#fff" text-anchor="middle">R</text>
<rect x="338.0" y="436.0" width="20" height="20" rx="3" fill="#e9b92f"/>
<text x="348.0" y="449.8" style="font:italic bold 13.5px 'Liberation Serif',serif" fill="#1a1408" text-anchor="middle">fx</text>
<rect x="338.0" y="496.0" width="20" height="20" rx="3" fill="#e9b92f"/>
<text x="348.0" y="509.8" style="font:italic bold 13.5px 'Liberation Serif',serif" fill="#1a1408" text-anchor="middle">fx</text>
<rect x="578.4" y="496.0" width="20" height="20" rx="3" fill="#e9b92f"/>
<text x="588.4" y="509.8" style="font:italic bold 13.5px 'Liberation Serif',serif" fill="#1a1408" text-anchor="middle">fx</text>
<path d="M570 388 H591 Q597 388 597 394 V410 Q597 416 592 419 L584.3 425 V604 H577 V425 L569 419 Q564 416 564 410 V394 Q564 388 570 388Z" fill="#3bb4e6"/>
</g>
<rect x="187" y="65" width="125" height="124.5" rx="25" fill="#1c1d21"/>
<rect x="214.5" y="96" width="48.5" height="53.5" rx="2" fill="url(#film)"/>
<rect x="220" y="104.5" width="5.2" height="5.2" fill="#1c1d21"/>
<rect x="220" y="114.9" width="5.2" height="5.2" fill="#1c1d21"/>
<rect x="220" y="125.3" width="5.2" height="5.2" fill="#1c1d21"/>
<rect x="220" y="135.7" width="5.2" height="5.2" fill="#1c1d21"/>
<rect x="251.8" y="104.5" width="5.2" height="5.2" fill="#1c1d21"/>
<rect x="251.8" y="114.9" width="5.2" height="5.2" fill="#1c1d21"/>
<rect x="251.8" y="125.3" width="5.2" height="5.2" fill="#1c1d21"/>
<rect x="251.8" y="135.7" width="5.2" height="5.2" fill="#1c1d21"/>
<rect x="237.5" y="123.7" width="54.2" height="38.6" rx="5.5" fill="#1d1f23" stroke="#1ea588" stroke-width="3"/>
<path d="M239.6 143.0 L239.6 142.3 L240.5 142.3 L241.4 142.3 L242.3 142.3 L243.2 141.0 L244.1 138.1 L245.0 137.1 L245.9 130.5 L246.8 136.8 L247.7 136.3 L248.6 135.6 L249.5 137.3 L250.4 138.5 L251.3 140.4 L252.2 140.5 L253.1 141.3 L254.0 141.8 L254.9 142.1 L255.8 142.3 L256.7 139.3 L257.6 138.1 L258.5 133.0 L259.4 127.5 L260.3 130.2 L261.2 133.4 L262.1 135.5 L263.0 136.9 L263.9 136.7 L264.8 138.9 L265.7 139.1 L266.6 140.0 L267.5 141.1 L268.4 141.4 L269.3 142.1 L270.2 142.0 L271.1 142.3 L272.0 141.1 L272.9 137.8 L273.8 138.2 L274.7 132.5 L275.6 136.5 L276.5 138.2 L277.4 137.0 L278.3 139.1 L279.2 140.5 L280.1 139.5 L281.0 141.4 L281.9 141.0 L282.8 141.6 L283.7 142.2 L284.6 142.3 L285.5 142.2 L286.4 141.7 L287.3 141.3 L288.2 140.9 L289.1 140.1 L290.0 141.2 L290.0 144.7 L289.1 145.8 L288.2 145.0 L287.3 144.7 L286.4 144.2 L285.5 143.8 L284.6 143.7 L283.7 143.8 L282.8 144.4 L281.9 144.9 L281.0 144.5 L280.1 146.3 L279.2 145.4 L278.3 146.7 L277.4 148.7 L276.5 147.5 L275.6 149.2 L274.7 153.0 L273.8 147.6 L272.9 148.0 L272.0 144.8 L271.1 143.7 L270.2 144.0 L269.3 143.9 L268.4 144.5 L267.5 144.8 L266.6 145.9 L265.7 146.7 L264.8 146.9 L263.9 148.9 L263.0 148.8 L262.1 150.2 L261.2 152.1 L260.3 155.2 L259.4 157.7 L258.5 152.5 L257.6 147.7 L256.7 146.5 L255.8 143.7 L254.9 143.8 L254.0 144.2 L253.1 144.6 L252.2 145.4 L251.3 145.5 L250.4 147.3 L249.5 148.4 L248.6 150.0 L247.7 149.4 L246.8 148.9 L245.9 154.9 L245.0 148.6 L244.1 147.6 L243.2 144.9 L242.3 143.7 L241.4 143.7 L240.5 143.7 L239.6 143.7 Z" fill="#1fb090"/>
<rect x="362.5" y="19.5" width="335" height="267.5" rx="20" fill="#1c1d21"/>
<text x="397.6" y="53.8" font-size="20" fill="#fff" textLength="119.6" lengthAdjust="spacingAndGlyphs">My sequence</text>
<rect x="527.5" y="41.0" width="14.5" height="2.8" fill="#fff"/>
<rect x="527.5" y="46.9" width="14.5" height="2.8" fill="#fff"/>
<rect x="527.5" y="52.8" width="14.5" height="2.8" fill="#fff"/>
<g clip-path="url(#clipSeq)"><use href="#land" x="402" y="76" width="256" height="144.5"/></g>
<path d="M409.3 238.8 V242.3 C409.3 245.2 404.9 245.4 404.9 247.8 C404.9 250.2 409.3 250.4 409.3 253.3 V256.8" fill="none" stroke="#f0f0f5" stroke-width="3.1" stroke-linecap="round" stroke-linejoin="round"/>
<path d="M434.5 238.8 V242.3 C434.5 245.2 438.9 245.4 438.9 247.8 C438.9 250.2 434.5 250.4 434.5 253.3 V256.8" fill="none" stroke="#f0f0f5" stroke-width="3.1" stroke-linecap="round" stroke-linejoin="round"/>
<path d="M472.9 238.8 V242.3 C472.9 245.2 468.5 245.4 468.5 247.8 C468.5 250.2 472.9 250.4 472.9 253.3 V256.8" fill="none" stroke="#f0f0f5" stroke-width="3.1" stroke-linecap="round" stroke-linejoin="round"/>
<path d="M477.8 248.3 L484.0 243.3 V246.1 H489.6 V250.5 H484.0 V253.3Z" fill="#dedee8" stroke="#dedee8" stroke-width="0.8" stroke-linejoin="round"/>
<path d="M530.2 242.2 V253.4 L518.8 247.8Z" fill="#dedee8" stroke="#dedee8" stroke-width="1.6" stroke-linejoin="round"/>
<rect x="533.4" y="240.2" width="3.4" height="15.2" rx="1.6" fill="#f0f0f5"/>
<path d="M559 242.4 V253.2 L573 247.8Z" fill="#dedee8" stroke="#dedee8" stroke-width="8" stroke-linejoin="round"/>
<rect x="588.8" y="240.2" width="3.4" height="15.2" rx="1.6" fill="#f0f0f5"/>
<path d="M596 242.2 V253.4 L608 247.8Z" fill="#dedee8" stroke="#dedee8" stroke-width="1.6" stroke-linejoin="round"/>
<path d="M647.3 248.3 L641.1 243.3 V246.1 H634.6 V250.5 H641.1 V253.3Z" fill="#dedee8" stroke="#dedee8" stroke-width="0.8" stroke-linejoin="round"/>
<path d="M652.2 238.8 V242.3 C652.2 245.2 656.6 245.4 656.6 247.8 C656.6 250.2 652.2 250.4 652.2 253.3 V256.8" fill="none" stroke="#f0f0f5" stroke-width="3.1" stroke-linecap="round" stroke-linejoin="round"/>
<rect x="737.5" y="43.8" width="199.5" height="280.7" rx="26" fill="#1c1d21"/>
<path d="M757.3 69.3 L761.2 73.2 L765.2 69.3" fill="none" stroke="#e8e8ec" stroke-width="1.4" stroke-linecap="round" stroke-linejoin="round"/>
<text x="771" y="74.4" font-size="13.2" fill="#f4f4f6">Correction</text>
<circle cx="776.7" cy="93.8" r="5.6" fill="#4aa8e0"/>
<circle cx="808.3" cy="90.5" r="3.6" fill="#9a9a9e"/>
<circle cx="811.3" cy="96" r="3.6" fill="#7c7c80"/>
<circle cx="805.3" cy="96.3" r="3.8" fill="#ffffff"/>
<g><path d="M847.77 116.00 A68.25 68.25 0 0 1 852.30 116.12 L850.95 138.73 A45.60 45.60 0 0 0 847.93 138.65 Z" fill="#f3e11c"/><path d="M851.35 116.07 A68.25 68.25 0 0 1 855.86 116.43 L853.33 138.93 A45.60 45.60 0 0 0 850.32 138.70 Z" fill="#f3de1c"/><path d="M854.91 116.33 A68.25 68.25 0 0 1 859.40 116.92 L855.70 139.26 A45.60 45.60 0 0 0 852.70 138.87 Z" fill="#f4dc1c"/><path d="M858.46 116.77 A68.25 68.25 0 0 1 862.91 117.59 L858.04 139.71 A45.60 45.60 0 0 0 855.07 139.16 Z" fill="#f4d91c"/><path d="M861.97 117.39 A68.25 68.25 0 0 1 866.37 118.45 L860.36 140.29 A45.60 45.60 0 0 0 857.42 139.58 Z" fill="#f4d51c"/><path d="M865.45 118.20 A68.25 68.25 0 0 1 869.79 119.49 L862.64 140.98 A45.60 45.60 0 0 0 859.74 140.12 Z" fill="#f5cf1c"/><path d="M868.89 119.19 A68.25 68.25 0 0 1 873.15 120.71 L864.89 141.79 A45.60 45.60 0 0 0 862.04 140.78 Z" fill="#f5ca1b"/><path d="M872.26 120.36 A68.25 68.25 0 0 1 876.44 122.10 L867.09 142.72 A45.60 45.60 0 0 0 864.29 141.57 Z" fill="#f6c41b"/><path d="M875.57 121.71 A68.25 68.25 0 0 1 879.66 123.66 L869.24 143.77 A45.60 45.60 0 0 0 866.51 142.46 Z" fill="#f6be1b"/><path d="M878.81 123.22 A68.25 68.25 0 0 1 882.79 125.38 L871.33 144.92 A45.60 45.60 0 0 0 868.67 143.48 Z" fill="#f6b91a"/><path d="M881.96 124.91 A68.25 68.25 0 0 1 885.82 127.27 L873.35 146.18 A45.60 45.60 0 0 0 870.77 144.60 Z" fill="#f7b31a"/><path d="M885.02 126.75 A68.25 68.25 0 0 1 888.75 129.32 L875.31 147.55 A45.60 45.60 0 0 0 872.82 145.83 Z" fill="#f7ac1a"/><path d="M887.98 128.76 A68.25 68.25 0 0 1 891.57 131.51 L877.19 149.01 A45.60 45.60 0 0 0 874.79 147.17 Z" fill="#f6a41b"/><path d="M890.83 130.91 A68.25 68.25 0 0 1 894.27 133.85 L879.00 150.58 A45.60 45.60 0 0 0 876.70 148.61 Z" fill="#f59c1b"/><path d="M893.56 133.21 A68.25 68.25 0 0 1 896.85 136.33 L880.72 152.23 A45.60 45.60 0 0 0 878.53 150.15 Z" fill="#f5941c"/><path d="M896.17 135.65 A68.25 68.25 0 0 1 899.29 138.94 L882.35 153.97 A45.60 45.60 0 0 0 880.27 151.78 Z" fill="#f48d1c"/><path d="M898.65 138.23 A68.25 68.25 0 0 1 901.59 141.67 L883.89 155.80 A45.60 45.60 0 0 0 881.92 153.50 Z" fill="#f4851c"/><path d="M900.99 140.93 A68.25 68.25 0 0 1 903.74 144.52 L885.33 157.71 A45.60 45.60 0 0 0 883.49 155.31 Z" fill="#f37d1d"/><path d="M903.18 143.75 A68.25 68.25 0 0 1 905.75 147.48 L886.67 159.68 A45.60 45.60 0 0 0 884.95 157.19 Z" fill="#f3761d"/><path d="M905.23 146.68 A68.25 68.25 0 0 1 907.59 150.54 L887.90 161.73 A45.60 45.60 0 0 0 886.32 159.15 Z" fill="#f26e1e"/><path d="M907.12 149.71 A68.25 68.25 0 0 1 909.28 153.69 L889.02 163.83 A45.60 45.60 0 0 0 887.58 161.17 Z" fill="#f2671e"/><path d="M908.84 152.84 A68.25 68.25 0 0 1 910.79 156.93 L890.04 165.99 A45.60 45.60 0 0 0 888.73 163.26 Z" fill="#f1601f"/><path d="M910.40 156.06 A68.25 68.25 0 0 1 912.14 160.24 L890.93 168.21 A45.60 45.60 0 0 0 889.78 165.41 Z" fill="#f05920"/><path d="M911.79 159.35 A68.25 68.25 0 0 1 913.31 163.61 L891.72 170.46 A45.60 45.60 0 0 0 890.71 167.61 Z" fill="#ef5221"/><path d="M913.01 162.71 A68.25 68.25 0 0 1 914.30 167.05 L892.38 172.76 A45.60 45.60 0 0 0 891.52 169.86 Z" fill="#ee4b22"/><path d="M914.05 166.13 A68.25 68.25 0 0 1 915.11 170.53 L892.92 175.08 A45.60 45.60 0 0 0 892.21 172.14 Z" fill="#ed4423"/><path d="M914.91 169.59 A68.25 68.25 0 0 1 915.73 174.04 L893.34 177.43 A45.60 45.60 0 0 0 892.79 174.46 Z" fill="#ec3d24"/><path d="M915.58 173.10 A68.25 68.25 0 0 1 916.17 177.59 L893.63 179.80 A45.60 45.60 0 0 0 893.24 176.80 Z" fill="#ec3724"/><path d="M916.07 176.64 A68.25 68.25 0 0 1 916.43 181.15 L893.80 182.18 A45.60 45.60 0 0 0 893.57 179.17 Z" fill="#eb3025"/><path d="M916.38 180.20 A68.25 68.25 0 0 1 916.50 184.73 L893.85 184.57 A45.60 45.60 0 0 0 893.77 181.55 Z" fill="#ea2a27"/><path d="M916.50 183.77 A68.25 68.25 0 0 1 916.38 188.30 L893.77 186.95 A45.60 45.60 0 0 0 893.85 183.93 Z" fill="#ea2830"/><path d="M916.43 187.35 A68.25 68.25 0 0 1 916.07 191.86 L893.57 189.33 A45.60 45.60 0 0 0 893.80 186.32 Z" fill="#ea2639"/><path d="M916.17 190.91 A68.25 68.25 0 0 1 915.58 195.40 L893.24 191.70 A45.60 45.60 0 0 0 893.63 188.70 Z" fill="#ea2442"/><path d="M915.73 194.46 A68.25 68.25 0 0 1 914.91 198.91 L892.79 194.04 A45.60 45.60 0 0 0 893.34 191.07 Z" fill="#ea224a"/><path d="M915.11 197.97 A68.25 68.25 0 0 1 914.05 202.37 L892.21 196.36 A45.60 45.60 0 0 0 892.92 193.42 Z" fill="#ea2053"/><path d="M914.30 201.45 A68.25 68.25 0 0 1 913.01 205.79 L891.52 198.64 A45.60 45.60 0 0 0 892.38 195.74 Z" fill="#ea1e5c"/><path d="M913.31 204.89 A68.25 68.25 0 0 1 911.79 209.15 L890.71 200.89 A45.60 45.60 0 0 0 891.72 198.04 Z" fill="#ea1c65"/><path d="M912.14 208.26 A68.25 68.25 0 0 1 910.40 212.44 L889.78 203.09 A45.60 45.60 0 0 0 890.93 200.29 Z" fill="#e91a6d"/><path d="M910.79 211.57 A68.25 68.25 0 0 1 908.84 215.66 L888.73 205.24 A45.60 45.60 0 0 0 890.04 202.51 Z" fill="#e31c74"/><path d="M909.28 214.81 A68.25 68.25 0 0 1 907.12 218.79 L887.58 207.33 A45.60 45.60 0 0 0 889.02 204.67 Z" fill="#dc1d7b"/><path d="M907.59 217.96 A68.25 68.25 0 0 1 905.23 221.82 L886.32 209.35 A45.60 45.60 0 0 0 887.90 206.77 Z" fill="#d61f82"/><path d="M905.75 221.02 A68.25 68.25 0 0 1 903.18 224.75 L884.95 211.31 A45.60 45.60 0 0 0 886.67 208.82 Z" fill="#d02089"/><path d="M903.74 223.98 A68.25 68.25 0 0 1 900.99 227.57 L883.49 213.19 A45.60 45.60 0 0 0 885.33 210.79 Z" fill="#c92290"/><path d="M901.59 226.83 A68.25 68.25 0 0 1 898.65 230.27 L881.92 215.00 A45.60 45.60 0 0 0 883.89 212.70 Z" fill="#c32397"/><path d="M899.29 229.56 A68.25 68.25 0 0 1 896.17 232.85 L880.27 216.72 A45.60 45.60 0 0 0 882.35 214.53 Z" fill="#ba259a"/><path d="M896.85 232.17 A68.25 68.25 0 0 1 893.56 235.29 L878.53 218.35 A45.60 45.60 0 0 0 880.72 216.27 Z" fill="#ae269b"/><path d="M894.27 234.65 A68.25 68.25 0 0 1 890.83 237.59 L876.70 219.89 A45.60 45.60 0 0 0 879.00 217.92 Z" fill="#a3279c"/><path d="M891.57 236.99 A68.25 68.25 0 0 1 887.98 239.74 L874.79 221.33 A45.60 45.60 0 0 0 877.19 219.49 Z" fill="#97299c"/><path d="M888.75 239.18 A68.25 68.25 0 0 1 885.02 241.75 L872.82 222.67 A45.60 45.60 0 0 0 875.31 220.95 Z" fill="#8c2a9d"/><path d="M885.82 241.23 A68.25 68.25 0 0 1 881.96 243.59 L870.77 223.90 A45.60 45.60 0 0 0 873.35 222.32 Z" fill="#802b9e"/><path d="M882.79 243.12 A68.25 68.25 0 0 1 878.81 245.28 L868.67 225.02 A45.60 45.60 0 0 0 871.33 223.58 Z" fill="#752d9e"/><path d="M879.66 244.84 A68.25 68.25 0 0 1 875.57 246.79 L866.51 226.04 A45.60 45.60 0 0 0 869.24 224.73 Z" fill="#6a2e9f"/><path d="M876.44 246.40 A68.25 68.25 0 0 1 872.26 248.14 L864.29 226.93 A45.60 45.60 0 0 0 867.09 225.78 Z" fill="#5f2fa0"/><path d="M873.15 247.79 A68.25 68.25 0 0 1 868.89 249.31 L862.04 227.72 A45.60 45.60 0 0 0 864.89 226.71 Z" fill="#5531a0"/><path d="M869.79 249.01 A68.25 68.25 0 0 1 865.45 250.30 L859.74 228.38 A45.60 45.60 0 0 0 862.64 227.52 Z" fill="#4a32a1"/><path d="M866.37 250.05 A68.25 68.25 0 0 1 861.97 251.11 L857.42 228.92 A45.60 45.60 0 0 0 860.36 228.21 Z" fill="#3f33a2"/><path d="M862.91 250.91 A68.25 68.25 0 0 1 858.46 251.73 L855.07 229.34 A45.60 45.60 0 0 0 858.04 228.79 Z" fill="#3835a2"/><path d="M859.40 251.58 A68.25 68.25 0 0 1 854.91 252.17 L852.70 229.63 A45.60 45.60 0 0 0 855.70 229.24 Z" fill="#3536a3"/><path d="M855.86 252.07 A68.25 68.25 0 0 1 851.35 252.43 L850.32 229.80 A45.60 45.60 0 0 0 853.33 229.57 Z" fill="#3137a4"/><path d="M852.30 252.38 A68.25 68.25 0 0 1 847.77 252.50 L847.93 229.85 A45.60 45.60 0 0 0 850.95 229.77 Z" fill="#2e38a5"/><path d="M848.73 252.50 A68.25 68.25 0 0 1 844.20 252.38 L845.55 229.77 A45.60 45.60 0 0 0 848.57 229.85 Z" fill="#2b3aa6"/><path d="M845.15 252.43 A68.25 68.25 0 0 1 840.64 252.07 L843.17 229.57 A45.60 45.60 0 0 0 846.18 229.80 Z" fill="#293da9"/><path d="M841.59 252.17 A68.25 68.25 0 0 1 837.10 251.58 L840.80 229.24 A45.60 45.60 0 0 0 843.80 229.63 Z" fill="#2941ac"/><path d="M838.04 251.73 A68.25 68.25 0 0 1 833.59 250.91 L838.46 228.79 A45.60 45.60 0 0 0 841.43 229.34 Z" fill="#2844b0"/><path d="M834.53 251.11 A68.25 68.25 0 0 1 830.13 250.05 L836.14 228.21 A45.60 45.60 0 0 0 839.08 228.92 Z" fill="#2748b3"/><path d="M831.05 250.30 A68.25 68.25 0 0 1 826.71 249.01 L833.86 227.52 A45.60 45.60 0 0 0 836.76 228.38 Z" fill="#264cb6"/><path d="M827.61 249.31 A68.25 68.25 0 0 1 823.35 247.79 L831.61 226.71 A45.60 45.60 0 0 0 834.46 227.72 Z" fill="#254fba"/><path d="M824.24 248.14 A68.25 68.25 0 0 1 820.06 246.40 L829.41 225.78 A45.60 45.60 0 0 0 832.21 226.93 Z" fill="#2553bd"/><path d="M820.93 246.79 A68.25 68.25 0 0 1 816.84 244.84 L827.26 224.73 A45.60 45.60 0 0 0 829.99 226.04 Z" fill="#2457c1"/><path d="M817.69 245.28 A68.25 68.25 0 0 1 813.71 243.12 L825.17 223.58 A45.60 45.60 0 0 0 827.83 225.02 Z" fill="#235fc4"/><path d="M814.54 243.59 A68.25 68.25 0 0 1 810.68 241.23 L823.15 222.32 A45.60 45.60 0 0 0 825.73 223.90 Z" fill="#2267c8"/><path d="M811.48 241.75 A68.25 68.25 0 0 1 807.75 239.18 L821.19 220.95 A45.60 45.60 0 0 0 823.68 222.67 Z" fill="#216fcb"/><path d="M808.52 239.74 A68.25 68.25 0 0 1 804.93 236.99 L819.31 219.49 A45.60 45.60 0 0 0 821.71 221.33 Z" fill="#2076cf"/><path d="M805.67 237.59 A68.25 68.25 0 0 1 802.23 234.65 L817.50 217.92 A45.60 45.60 0 0 0 819.80 219.89 Z" fill="#1f7ed2"/><path d="M802.94 235.29 A68.25 68.25 0 0 1 799.65 232.17 L815.78 216.27 A45.60 45.60 0 0 0 817.97 218.35 Z" fill="#1f86d6"/><path d="M800.33 232.85 A68.25 68.25 0 0 1 797.21 229.56 L814.15 214.53 A45.60 45.60 0 0 0 816.23 216.72 Z" fill="#1e8ed9"/><path d="M797.85 230.27 A68.25 68.25 0 0 1 794.91 226.83 L812.61 212.70 A45.60 45.60 0 0 0 814.58 215.00 Z" fill="#1d96dd"/><path d="M795.51 227.57 A68.25 68.25 0 0 1 792.76 223.98 L811.17 210.79 A45.60 45.60 0 0 0 813.01 213.19 Z" fill="#1c9ddf"/><path d="M793.32 224.75 A68.25 68.25 0 0 1 790.75 221.02 L809.83 208.82 A45.60 45.60 0 0 0 811.55 211.31 Z" fill="#1da1db"/><path d="M791.27 221.82 A68.25 68.25 0 0 1 788.91 217.96 L808.60 206.77 A45.60 45.60 0 0 0 810.18 209.35 Z" fill="#1ea5d7"/><path d="M789.38 218.79 A68.25 68.25 0 0 1 787.22 214.81 L807.48 204.67 A45.60 45.60 0 0 0 808.92 207.33 Z" fill="#1fa9d3"/><path d="M787.66 215.66 A68.25 68.25 0 0 1 785.71 211.57 L806.46 202.51 A45.60 45.60 0 0 0 807.77 205.24 Z" fill="#20adcf"/><path d="M786.10 212.44 A68.25 68.25 0 0 1 784.36 208.26 L805.57 200.29 A45.60 45.60 0 0 0 806.72 203.09 Z" fill="#21b1cb"/><path d="M784.71 209.15 A68.25 68.25 0 0 1 783.19 204.89 L804.78 198.04 A45.60 45.60 0 0 0 805.79 200.89 Z" fill="#23b4c6"/><path d="M783.49 205.79 A68.25 68.25 0 0 1 782.20 201.45 L804.12 195.74 A45.60 45.60 0 0 0 804.98 198.64 Z" fill="#27b5ba"/><path d="M782.45 202.37 A68.25 68.25 0 0 1 781.39 197.97 L803.58 193.42 A45.60 45.60 0 0 0 804.29 196.36 Z" fill="#2ab5ae"/><path d="M781.59 198.91 A68.25 68.25 0 0 1 780.77 194.46 L803.16 191.07 A45.60 45.60 0 0 0 803.71 194.04 Z" fill="#2eb6a2"/><path d="M780.92 195.40 A68.25 68.25 0 0 1 780.33 190.91 L802.87 188.70 A45.60 45.60 0 0 0 803.26 191.70 Z" fill="#32b696"/><path d="M780.43 191.86 A68.25 68.25 0 0 1 780.07 187.35 L802.70 186.32 A45.60 45.60 0 0 0 802.93 189.33 Z" fill="#36b78a"/><path d="M780.12 188.30 A68.25 68.25 0 0 1 780.00 183.77 L802.65 183.93 A45.60 45.60 0 0 0 802.73 186.95 Z" fill="#3ab87e"/><path d="M780.00 184.73 A68.25 68.25 0 0 1 780.12 180.20 L802.73 181.55 A45.60 45.60 0 0 0 802.65 184.57 Z" fill="#3eb875"/><path d="M780.07 181.15 A68.25 68.25 0 0 1 780.43 176.64 L802.93 179.17 A45.60 45.60 0 0 0 802.70 182.18 Z" fill="#42b86e"/><path d="M780.33 177.59 A68.25 68.25 0 0 1 780.92 173.10 L803.26 176.80 A45.60 45.60 0 0 0 802.87 179.80 Z" fill="#46b967"/><path d="M780.77 174.04 A68.25 68.25 0 0 1 781.59 169.59 L803.71 174.46 A45.60 45.60 0 0 0 803.16 177.43 Z" fill="#49b960"/><path d="M781.39 170.53 A68.25 68.25 0 0 1 782.45 166.13 L804.29 172.14 A45.60 45.60 0 0 0 803.58 175.08 Z" fill="#4db959"/><path d="M782.20 167.05 A68.25 68.25 0 0 1 783.49 162.71 L804.98 169.86 A45.60 45.60 0 0 0 804.12 172.76 Z" fill="#51b952"/><path d="M783.19 163.61 A68.25 68.25 0 0 1 784.71 159.35 L805.79 167.61 A45.60 45.60 0 0 0 804.78 170.46 Z" fill="#55ba4b"/><path d="M784.36 160.24 A68.25 68.25 0 0 1 786.10 156.06 L806.72 165.41 A45.60 45.60 0 0 0 805.57 168.21 Z" fill="#59ba44"/><path d="M785.71 156.93 A68.25 68.25 0 0 1 787.66 152.84 L807.77 163.26 A45.60 45.60 0 0 0 806.46 165.99 Z" fill="#5dba3e"/><path d="M787.22 153.69 A68.25 68.25 0 0 1 789.38 149.71 L808.92 161.17 A45.60 45.60 0 0 0 807.48 163.83 Z" fill="#64bc3c"/><path d="M788.91 150.54 A68.25 68.25 0 0 1 791.27 146.68 L810.18 159.15 A45.60 45.60 0 0 0 808.60 161.73 Z" fill="#6bbe3a"/><path d="M790.75 147.48 A68.25 68.25 0 0 1 793.32 143.75 L811.55 157.19 A45.60 45.60 0 0 0 809.83 159.68 Z" fill="#73c038"/><path d="M792.76 144.52 A68.25 68.25 0 0 1 795.51 140.93 L813.01 155.31 A45.60 45.60 0 0 0 811.17 157.71 Z" fill="#7ac236"/><path d="M794.91 141.67 A68.25 68.25 0 0 1 797.85 138.23 L814.58 153.50 A45.60 45.60 0 0 0 812.61 155.80 Z" fill="#81c434"/><path d="M797.21 138.94 A68.25 68.25 0 0 1 800.33 135.65 L816.23 151.78 A45.60 45.60 0 0 0 814.15 153.97 Z" fill="#88c632"/><path d="M799.65 136.33 A68.25 68.25 0 0 1 802.94 133.21 L817.97 150.15 A45.60 45.60 0 0 0 815.78 152.23 Z" fill="#8fc830"/><path d="M802.23 133.85 A68.25 68.25 0 0 1 805.67 130.91 L819.80 148.61 A45.60 45.60 0 0 0 817.50 150.58 Z" fill="#96ca2e"/><path d="M804.93 131.51 A68.25 68.25 0 0 1 808.52 128.76 L821.71 147.17 A45.60 45.60 0 0 0 819.31 149.01 Z" fill="#9dcc2c"/><path d="M807.75 129.32 A68.25 68.25 0 0 1 811.48 126.75 L823.68 145.83 A45.60 45.60 0 0 0 821.19 147.55 Z" fill="#a5ce2a"/><path d="M810.68 127.27 A68.25 68.25 0 0 1 814.54 124.91 L825.73 144.60 A45.60 45.60 0 0 0 823.15 146.18 Z" fill="#add029"/><path d="M813.71 125.38 A68.25 68.25 0 0 1 817.69 123.22 L827.83 143.48 A45.60 45.60 0 0 0 825.17 144.92 Z" fill="#b4d228"/><path d="M816.84 123.66 A68.25 68.25 0 0 1 820.93 121.71 L829.99 142.46 A45.60 45.60 0 0 0 827.26 143.77 Z" fill="#bcd426"/><path d="M820.06 122.10 A68.25 68.25 0 0 1 824.24 120.36 L832.21 141.57 A45.60 45.60 0 0 0 829.41 142.72 Z" fill="#c3d625"/><path d="M823.35 120.71 A68.25 68.25 0 0 1 827.61 119.19 L834.46 140.78 A45.60 45.60 0 0 0 831.61 141.79 Z" fill="#cbd824"/><path d="M826.71 119.49 A68.25 68.25 0 0 1 831.05 118.20 L836.76 140.12 A45.60 45.60 0 0 0 833.86 140.98 Z" fill="#d3da22"/><path d="M830.13 118.45 A68.25 68.25 0 0 1 834.53 117.39 L839.08 139.58 A45.60 45.60 0 0 0 836.14 140.29 Z" fill="#d9db21"/><path d="M833.59 117.59 A68.25 68.25 0 0 1 838.04 116.77 L841.43 139.16 A45.60 45.60 0 0 0 838.46 139.71 Z" fill="#dfdd20"/><path d="M837.10 116.92 A68.25 68.25 0 0 1 841.59 116.33 L843.80 138.87 A45.60 45.60 0 0 0 840.80 139.26 Z" fill="#e4de1f"/><path d="M840.64 116.43 A68.25 68.25 0 0 1 845.15 116.07 L846.18 138.70 A45.60 45.60 0 0 0 843.17 138.93 Z" fill="#eae01e"/><path d="M844.20 116.12 A68.25 68.25 0 0 1 848.73 116.00 L848.57 138.65 A45.60 45.60 0 0 0 845.55 138.73 Z" fill="#f0e11d"/></g>
<rect x="758.6" y="115" width="3" height="140" fill="#050506"/>
<path d="M758 179.5 H764.5 L768.5 184 L764.5 188.5 H758Z" fill="#fff" stroke="#fff" stroke-width="1" stroke-linejoin="round"/>
<text x="752.5" y="277.0" font-size="9.2" fill="#f0f0f2" textLength="50.5" lengthAdjust="spacingAndGlyphs">Temperature</text>
<rect x="810" y="272.3" width="40" height="3" rx="1.5" fill="url(#tempL)"/>
<rect x="860" y="272.3" width="40.5" height="3" rx="1.5" fill="url(#tempR)"/>
<circle cx="854.5" cy="273.8" r="2.9" fill="#1c1d21" stroke="#fff" stroke-width="1.8"/>
<text x="905" y="277.2" font-size="9.6" fill="#4aa4dc">0,0</text>
<text x="752.5" y="298.2" font-size="9.2" fill="#f0f0f2" textLength="14.5" lengthAdjust="spacingAndGlyphs">Tint</text>
<rect x="810" y="293.5" width="40" height="3" rx="1.5" fill="url(#tintL)"/>
<rect x="860" y="293.5" width="40.5" height="3" rx="1.5" fill="url(#tintR)"/>
<circle cx="854.5" cy="295.0" r="2.9" fill="#1c1d21" stroke="#fff" stroke-width="1.8"/>
<text x="905" y="298.4" font-size="9.6" fill="#4aa4dc">0,0</text>
<rect x="3.7" y="187.5" width="134.3" height="240.5" rx="19" fill="#1c1d21"/>
<path d="M31.3 215.4 L54.2 230.4 L43.4 234 L36.9 242 Z" fill="#d2d2e2" stroke="#d2d2e2" stroke-width="1.2" stroke-linejoin="round"/>
<rect x="78" y="215.5" width="4" height="22" rx="2" fill="#d2d2e2"/>
<rect x="107" y="215.5" width="4" height="22" rx="2" fill="#d2d2e2"/>
<path d="M88 226.7 H101" stroke="#d2d2e2" stroke-width="3.6" fill="none"/>
<path d="M91 221.2 V232.2 L84.4 226.7Z M98 221.2 V232.2 L104.6 226.7Z" fill="#d2d2e2"/>
<path d="M116.0 245.3 H109.8 L116.0 239.1Z" fill="#d2d2e2" stroke="#d2d2e2" stroke-width="0.8" stroke-linejoin="round"/>
<path d="M25.3 278.6 V274.2 H29.8 M32 274.2 H36.2 M38.4 274.2 H42.7 V278.6 M42.7 288.6 V292.9 H38.4 M36.2 292.9 H32 M29.8 292.9 H25.3 V288.6 M25.3 286.6 V280.6" fill="none" stroke="#d2d2e2" stroke-width="2.8" stroke-linejoin="round"/>
<path d="M37.2 284.2 H46.5" stroke="#dcdcea" stroke-width="3" stroke-linecap="round" fill="none"/>
<path d="M45.8 279.3 V289.1 L54.6 284.2Z" fill="#dcdcea" stroke="#dcdcea" stroke-width="0.8" stroke-linejoin="round"/>
<path d="M61.3 302.5 H55.1 L61.3 296.3Z" fill="#d2d2e2" stroke="#d2d2e2" stroke-width="0.8" stroke-linejoin="round"/>
<g transform="translate(82.8 296.6) rotate(-45.5)"><path d="M0 -3.1 C5 -6.6 10 -8.9 16 -8.6 C21 -8.3 24 -5.5 25.2 -2.4 V2.4 C24 5.5 21 8.3 16 8.6 C10 8.9 5 6.6 0 3.1 L2.5 0Z" fill="#d2d2e2"/><path d="M0 0 H13.4" stroke="#1c1d21" stroke-width="2.5" stroke-linecap="round"/><rect x="27" y="-6.3" width="5.6" height="12.6" rx="2.6" fill="#d2d2e2"/></g>
<rect x="38.6" y="320.8" width="3.6" height="23.2" rx="1.8" fill="#d2d2e2"/>
<path d="M30 331.7 H51" stroke="#d2d2e2" stroke-width="2.8" fill="none"/>
<path d="M35 325 V338.4 L24.2 331.7Z M46 325 V338.4 L57 331.7Z" fill="#d2d2e2" stroke="#d2d2e2" stroke-width="0.8" stroke-linejoin="round"/>
<path d="M61.0 350.8 H54.8 L61.0 344.6Z" fill="#d2d2e2" stroke="#d2d2e2" stroke-width="0.8" stroke-linejoin="round"/>
<rect x="81.3" y="318.3" width="29.5" height="23.4" rx="4.6" fill="#ffffff"/>
<ellipse cx="89.8" cy="326.8" rx="2" ry="2.8" transform="rotate(25 89.8 326.8)" fill="#c6c6dc"/>
<path d="M116.0 350.0 H109.8 L116.0 343.8Z" fill="#d2d2e2" stroke="#d2d2e2" stroke-width="0.8" stroke-linejoin="round"/>
<g transform="translate(38.2 380) rotate(47)"><rect x="-16.6" y="-8.7" width="33.2" height="17.4" rx="2.6" fill="#d2d2e2"/><circle cx="-9.9" cy="0" r="2.1" fill="#1c1d21"/><circle cx="9.9" cy="0" r="2.1" fill="#1c1d21"/><rect x="-3.3" y="-3.3" width="6.6" height="6.6" rx="0.8" fill="#1c1d21" transform="rotate(55)"/></g>
<path d="M83.2 377.6 C84.6 376.6 86.4 378.4 88.2 380.2 L90.4 382.2 L90.2 376 H105.6 C105.8 381 105.8 386 104.4 389.4 C102.8 393 100 394.2 96.8 394.2 C93.4 394.2 91.2 392.6 89 389.6 C87 386.8 85.2 383.8 83.4 380.8 C82.6 379.6 82.2 378.4 83.2 377.6Z" fill="#d2d2e2"/>
<path d="M91.4 378 L89.2 368.6 M95.7 377.6 V366.2 M100.8 378 L101.8 367.8 M104.9 379.6 L108 373.8" fill="none" stroke="#e2e2ee" stroke-width="2.6" stroke-linecap="round"/>
<path d="M117.0 397.3 H110.8 L117.0 391.1Z" fill="#d2d2e2" stroke="#d2d2e2" stroke-width="0.8" stroke-linejoin="round"/>
<rect x="821.5" y="353" width="131.5" height="213" rx="21" fill="#1c1d21"/>
<path d="M844.0 384.6 V377.4 Q844.0 373.4 848.0 373.4 H872.6 Q876.6 373.4 876.6 377.4 V384.6Z" fill="#2a2d31"/>
<rect x="844.0" y="386.5" width="36.4" height="128" fill="#2a2d31"/>
<rect x="844.0" y="395" width="32.6" height="4" fill="#14a584"/>
<path d="M844.0 450.6 H876.6 V515 Q876.6 519 872.6 519 H848.0 Q844.0 519 844.0 515Z" fill="#0ba27f"/>
<path d="M880.3 384.6 V377.4 Q880.3 373.4 884.3 373.4 H907.8 Q911.8 373.4 911.8 377.4 V384.6Z" fill="#2a2d31"/>
<rect x="880.3" y="386.5" width="31.5" height="128" fill="#2a2d31"/>
<rect x="880.3" y="395" width="31.5" height="4" fill="#14a584"/>
<path d="M880.3 435.6 H911.8 V515 Q911.8 519 907.8 519 H884.3 Q880.3 519 880.3 515Z" fill="#0ba27f"/>
<rect x="912" y="379.9" width="6.5" height="1.6" fill="#8a8e94"/>
<rect x="912" y="391.5" width="3.6" height="1.4" fill="#7a7e84"/>
<rect x="912" y="402.9" width="3.6" height="1.4" fill="#7a7e84"/>
<rect x="912" y="414.3" width="6.5" height="1.6" fill="#8a8e94"/>
<rect x="912" y="425.9" width="3.6" height="1.4" fill="#7a7e84"/>
<rect x="912" y="437.3" width="3.6" height="1.4" fill="#7a7e84"/>
<rect x="912" y="448.7" width="6.5" height="1.6" fill="#8a8e94"/>
<rect x="912" y="460.3" width="3.6" height="1.4" fill="#7a7e84"/>
<rect x="912" y="471.7" width="3.6" height="1.4" fill="#7a7e84"/>
<rect x="912" y="483.1" width="6.5" height="1.6" fill="#8a8e94"/>
<rect x="912" y="494.7" width="3.6" height="1.4" fill="#7a7e84"/>
<rect x="912" y="506.1" width="3.6" height="1.4" fill="#7a7e84"/>
<rect x="912" y="517.5" width="6.5" height="1.6" fill="#8a8e94"/>
<g font-size="10.2" fill="#a8acb2">
<text x="931" y="384.2" text-anchor="middle">0</text>
<text x="931" y="417.6" text-anchor="middle">-6</text>
<text x="931" y="451.4" text-anchor="middle">-12</text>
<text x="931" y="485.4" text-anchor="middle">-12</text>
<text x="931.5" y="518.6" text-anchor="middle">dB</text>
</g>
<text x="861.2" y="547.2" font-size="16" fill="#8f939a" text-anchor="middle">S</text>
<text x="896.4" y="547.2" font-size="16" fill="#8f939a" text-anchor="middle">S</text>
</svg>
</body></html>
